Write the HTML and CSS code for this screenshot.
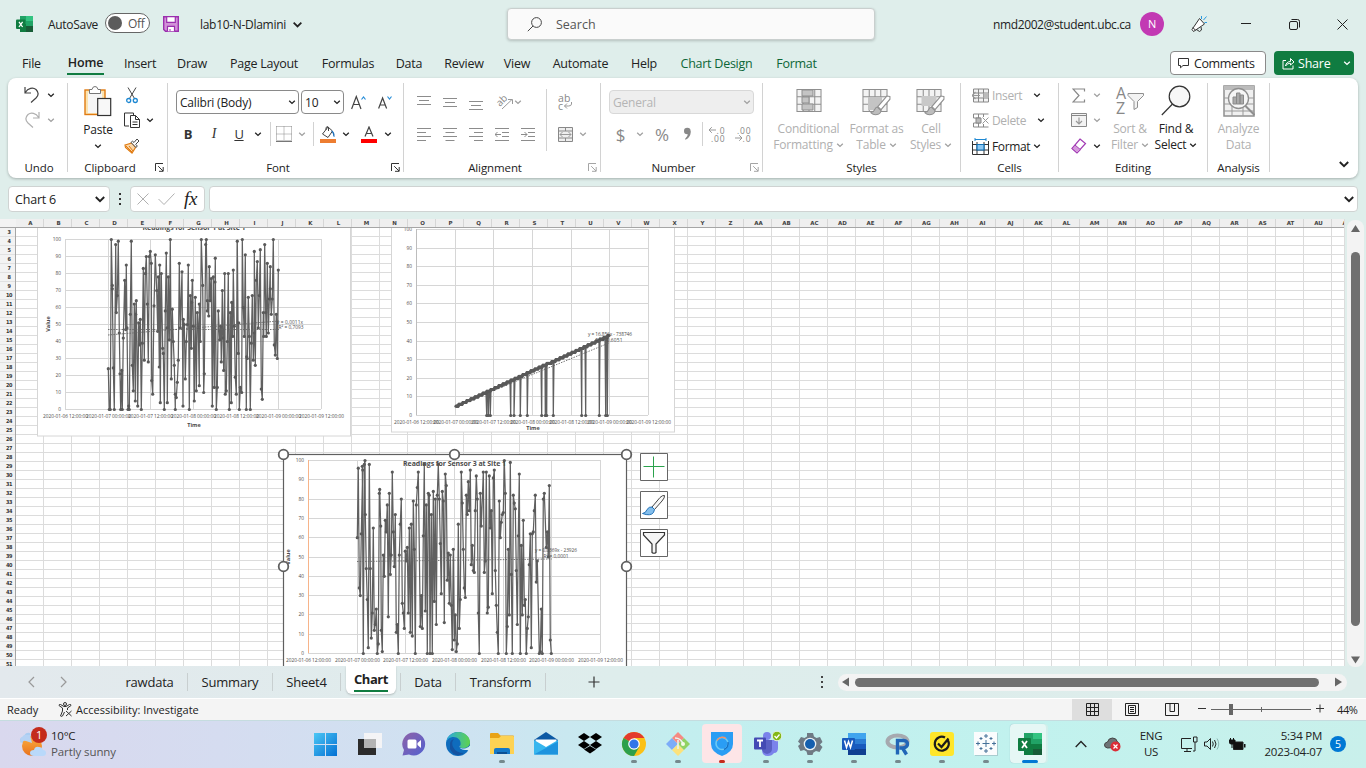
FILE: index.html
```html
<!DOCTYPE html>
<html lang="en">
<head>
<meta charset="utf-8">
<title>lab10-N-Dlamini - Excel</title>
<link rel="stylesheet" href="styles.css">
</head>
<body>
<svg class="defs" width="0" height="0">
  <symbol id="chev" viewBox="0 0 8 8"><path d="M1.2 2.7 4 5.4 6.8 2.7" fill="none" stroke="currentColor" stroke-width="1.3"/></symbol>
  <symbol id="launch" viewBox="0 0 9 9"><path d="M.5 8V.5H8M3.2 3.2l4.8 4.8M8.2 4v4.3H4" fill="none" stroke="currentColor"/></symbol>
  <symbol id="tbl" viewBox="0 0 24 22"><path d="M.5.5h23v21H.5z" fill="#f3f3f3" stroke="#8f8f8f"/><path d="M.5 7.5h23M.5 14.5h23M6.500 .5v21M17.500 .5v21M12 .5v21" stroke="#8f8f8f" fill="none"/></symbol>
  <symbol id="brush" viewBox="0 0 20 20"><path d="M19 1.500 16 1 7.500 11l3 3L19 4z" fill="#fff" stroke="#8f8f8f"/><path d="M7 11.500c-3 0-2 5-6 5.500 3 3 9 2 9.500-2z" fill="#bdbdbd" stroke="#8f8f8f"/></symbol>
</svg>

<header class="titlebar">
  <div class="c"><svg width="17" height="16" viewBox="0 0 17 16"><path d="M4 0h12a1 1 0 0 1 1 1v14a1 1 0 0 1-1 1H4z" fill="#21a366"/><path d="M4 8h6v8H4z" fill="#107c41"/><path d="M10 0h6q1 0 1 1v4h-7z" fill="#33c481"/><path d="M10 10h7v6h-7z" fill="#185c37"/><rect y="3.500" width="9.500" height="9.500" rx="1" fill="#107c41"/><path d="m3 5.800 3.600 5.200M6.600 5.800 3 11" stroke="#fff" stroke-width="1.300"/></svg></div>
  <span class="autosave">AutoSave</span>
  <div class="toggle"><i></i><span>Off</span></div>
  <div class="c"><svg width="16" height="16"><path d="M.7.7h14.600v14.600H2.500L.7 13.500z" fill="#d291d8" stroke="#9b2fae" stroke-width="1.400"/><path d="M3.700.7h8.600v5.600H3.700zM4.500 15.300v-5h7v5" fill="#fff" stroke="#9b2fae" stroke-width="1.200"/><path d="M7 13v2" stroke="#9b2fae"/></svg></div>
  <span class="docname">lab10-N-Dlamini</span>
  <div class="c"><svg width="11" height="11"><use href="#chev"/></svg></div>
  <div class="search"><svg width="16" height="16"><circle cx="9.500" cy="6.500" r="4.900" fill="none" stroke="#444"/><path d="M6 10 .8 15.200" stroke="#444"/></svg><span>Search</span></div>
  <span class="email">nmd2002@student.ubc.ca</span>
  <div class="c"><b class="avatar">N</b></div>
  <div class="c"><svg width="18" height="18" fill="none" stroke="#333"><path d="M9.500 3.500 2 14.500l1.500 2L14.500 9zM2.800 12.500l3 3" fill="#fff"/><path d="m6.500 14.500 3 2 2-1.500-.5-3"/><path d="M11.500 4V1M13.500 5l3-3.500M14.500 7.500H17" stroke="#2b9be0"/></svg></div>
  <div class="c"><svg width="10" height="10"><path d="M0 4.500h10" stroke="#222"/></svg></div>
  <div class="c"><svg width="11" height="11" fill="none" stroke="#222"><rect x=".5" y="2.500" width="8" height="8" rx="1.500"/><path d="M2.500 .5h6q2 0 2 2v6"/></svg></div>
  <div class="c"><svg width="11" height="11"><path d="m.5.5 10 10M10.500.5l-10 10" stroke="#222"/></svg></div>
</header>

<nav class="tabs">
  <span>File</span><span class="on">Home</span><span>Insert</span><span>Draw</span><span>Page Layout</span><span>Formulas</span><span>Data</span><span>Review</span><span>View</span><span>Automate</span><span>Help</span><span class="ctx">Chart Design</span><span class="ctx">Format</span>
  <div class="comments"><svg width="12" height="12"><path d="M.5 1.500h10v7H5l-2.500 2.300V8.500h-2z" fill="none" stroke="#333"/></svg>Comments</div>
  <div class="share"><svg width="13" height="13" fill="none" stroke="#fff"><path d="M4 3.500H1v8.500h10V8.500M3.500 9C4 6 6 4.500 8.500 4.500v-3L12 5 8.500 8V6.300C6.500 6.300 5 7 3.500 9z"/></svg><span>Share</span><svg width="8" height="8"><use href="#chev"/></svg></div>
</nav>

<section class="ribbon">
  <div class="group g-undo">
    <div class="tools three">
      <div class="row"><svg width="16" height="18" fill="none" stroke="#444" stroke-width="1.200"><path d="M1 1v6h6M1.300 6.500C4 2 9 1 12 3.500c3 3 2.500 6 0 8.500L7 16.500"/></svg><svg class="ch"><use href="#chev"/></svg></div>
      <div class="row dim"><svg width="16" height="18" fill="none" stroke="currentColor" stroke-width="1.200"><path d="M15 1v6H9M14.700 6.500C12 2 7 1 4 3.500c-3 3-2.500 6 0 8.500l5 4.500"/></svg><svg class="ch"><use href="#chev"/></svg></div>
    </div>
    <h4>Undo</h4>
  </div>

  <div class="group g-clip">
    <div class="split">
      <div class="big"><svg width="28" height="31"><rect x="1" y="4" width="20" height="24.500" fill="#fbe3b0" stroke="#e07b12" stroke-width="1.400"/><path d="M4 6.500h14V27H4z" fill="#f6f6f6"/><path d="M5.500 3.500H8q.5-3 3-3t3 3h2.500v4h-11z" fill="#fff" stroke="#777"/><rect x="13.700" y="12.500" width="13" height="17" fill="#f8f8f8" stroke="#333" stroke-width="1.200"/></svg><span>Paste</span><svg class="ch"><use href="#chev"/></svg></div>
      <div class="tools three">
        <div class="row"><svg width="12" height="17"><path d="M2 .5 8.500 11.500M10 .5 3.500 11.500" stroke="#444"/><circle cx="2.700" cy="13.500" r="2" fill="none" stroke="#1e88d2" stroke-width="1.300"/><circle cx="9.300" cy="13.500" r="2" fill="none" stroke="#1e88d2" stroke-width="1.300"/></svg></div>
        <div class="row"><svg width="17" height="17" fill="none" stroke="#333"><path d="M5 14H.5V1h9v2"/><path d="M6.500 3.500h5l4 4v8h-9zM11.500 3.500v4h4M8.500 10h5M8.500 12.500h5"/></svg><svg class="ch"><use href="#chev"/></svg></div>
        <div class="row"><svg width="16" height="16"><path d="m1 7 7-2 3.500 4.500L8 15 1.500 9.500z" fill="#fbd7a8" stroke="#e07b12" stroke-width="1.200"/><path d="m2 8 6 6M5 8l4 5" stroke="#e07b12"/><path d="m7 4.500 5 5 1.300-1.500-1.600-1.700L15 3 13 1l-3 3.500-1.500-1.300z" fill="#fff" stroke="#444"/></svg></div>
      </div>
    </div>
    <h4>Clipboard</h4><svg class="launch"><use href="#launch"/></svg>
  </div>

  <div class="group g-font">
    <div class="tools two">
      <div class="row r1">
        <div class="box"><span>Calibri (Body)</span><svg class="ch"><use href="#chev"/></svg></div>
        <div class="box"><span>10</span><svg class="ch"><use href="#chev"/></svg></div>
        <svg width="15" height="15" fill="none" stroke="#444" stroke-width="1.200"><path d="M.6 14 5.300 1.500 10 14M2.300 9.500h6"/><path d="m10.500 4.500 2-2.500 2 2.500" stroke="#2b8fd8"/></svg>
        <svg width="14" height="14" fill="none" stroke="#444" stroke-width="1.200"><path d="M.6 13.500 4.600 3l4 10.500M2 10h5"/><path d="m9.500 1.500 2 2.500 2-2.500" stroke="#2b8fd8"/></svg>
      </div>
      <div class="row r2">
        <b>B</b><i class="it">I</i><u>U</u><svg class="ch"><use href="#chev"/></svg><em class="bar"></em>
        <svg class="dim" width="16" height="16"><path d="M.5.500h15M.5 .5v14M15.500 .5v14M8 .5v14M.5 8h15" fill="none" stroke="#888" stroke-dasharray="1 1"/><path d="M0 15.300h16" stroke="#777" stroke-width="1.400"/></svg><svg class="ch dim"><use href="#chev"/></svg><em class="bar"></em>
        <svg width="16" height="17"><path d="m8 1-5.500 7L8 11.500 12.500 5zM6 4V1.500q2-2 2.500 0V5" fill="#fff" stroke="#444"/><path d="M11 4.500q4 .5 3.500 6.500-1.500 0-1.500-3z" fill="#1d6fb8"/><path d="M0 13h16v4H0z" fill="#ed7d31"/></svg><svg class="ch"><use href="#chev"/></svg>
        <svg width="16" height="17"><path d="m4 10.500 4-9.500 4 9.500M5.300 7.500h5.400" fill="none" stroke="#444" stroke-width="1.200"/><path d="M0 13h16v4H0z" fill="#f00"/></svg><svg class="ch"><use href="#chev"/></svg>
      </div>
    </div>
    <h4>Font</h4><svg class="launch"><use href="#launch"/></svg>
  </div>

  <div class="group g-align dim">
    <div class="split">
      <div class="tools two">
        <div class="row r1">
          <svg class="ln up"><path d="M0 3.500h14M2 7.500h10M0 11.500h14"/></svg>
          <svg class="ln"><path d="M0 3.500h14M2 7.500h10M0 11.500h14"/></svg>
          <svg class="ln dn"><path d="M0 3.500h14M2 7.500h10M0 11.500h14"/></svg>
          <svg class="orient" width="17" height="17"><text x="0" y="10" font-size="10" fill="#888" transform="rotate(-45 5 8)">ab</text><path d="m5 15 10-9.500M11 5.500h4.500V10" fill="none" stroke="#999"/></svg>
          <svg class="ch"><use href="#chev"/></svg>
        </div>
        <div class="row r2">
          <svg class="ln"><path d="M0 1.500h14M0 5.500h9M0 9.500h14M0 13.500h9"/></svg>
          <svg class="ln"><path d="M0 1.500h14M2.500 5.500h9M0 9.500h14M2.500 13.500h9"/></svg>
          <svg class="ln"><path d="M0 1.500h14M5 5.500h9M0 9.500h14M5 13.500h9"/></svg>
          <svg class="ln"><path d="M0 1.500h14M7 5.500h7M7 9.500h7M0 13.500h14M0 7.500h6M2.500 5 0 7.500 2.500 10"/></svg>
          <svg class="ln"><path d="M0 1.500h14M7 5.500h7M7 9.500h7M0 13.500h14M0 7.500h6M3.500 5 6 7.500 3.500 10"/></svg>
        </div>
      </div>
      <em class="bar tall"></em>
      <div class="tools two side">
        <div class="row"><svg width="15" height="17" fill="none"><text x="0" y="8" font-size="10.500" textLength="12.500" fill="#888">ab</text><text x="0" y="16" font-size="10.500" fill="#888">c</text><path d="M13.500 8v2q0 2-3 2H6.500M9 9.500 6.500 12 9 14.500" stroke="#999"/></svg></div>
        <div class="row"><svg width="15" height="15"><path d="M.5.5h14v14H.5zM.5 4h14M.5 11h14M7.500 .5V4M7.500 11v3.500" fill="#eee" stroke="#888"/><path d="M2 7.500h11M4.500 5 2 7.500 4.500 10M10.500 5 13 7.500 10.500 10" fill="none" stroke="#999"/></svg><svg class="ch"><use href="#chev"/></svg></div>
      </div>
    </div>
    <h4>Alignment</h4><svg class="launch"><use href="#launch"/></svg>
  </div>

  <div class="group g-num dim">
    <div class="tools two">
      <div class="row r1"><div class="box off"><span>General</span><svg class="ch"><use href="#chev"/></svg></div></div>
      <div class="row r2"><span class="sym">$</span><svg class="ch"><use href="#chev"/></svg><span class="sym">%</span><svg width="9" height="14"><circle cx="4.300" cy="4" r="3.300" fill="#888"/><path d="M7.600 4q.6 6-5 8.700l-.6-.8Q5 9.500 5 6z" fill="#888"/></svg><em class="bar"></em>
        <svg width="16" height="16"><path d="M0 4h7M2.800 1.200 0 4l2.800 2.800" fill="none" stroke="#999"/><text x="7.500" y="7.500" font-size="8.500" fill="#888" textLength="8">.0</text><text x="2" y="15.500" font-size="8.500" fill="#888" textLength="13.500">.00</text></svg>
        <svg width="16" height="16"><path d="M0 12h7M4.200 9.200 7 12l-2.800 2.800" fill="none" stroke="#999"/><text x="2" y="7.500" font-size="8.500" fill="#888" textLength="13.500">.00</text><text x="7.500" y="15.500" font-size="8.500" fill="#888" textLength="8">.0</text></svg>
      </div>
    </div>
    <h4>Number</h4><svg class="launch"><use href="#launch"/></svg>
  </div>

  <div class="group g-styles dim">
    <div class="bigs">
      <div class="big"><svg width="28" height="31"><use href="#tbl" x="0" y="4" width="28" height="23"/><path d="M7 5h11v6H7zM7 12h7v6H7zM7 19h11v6H7z" fill="#c4c4c4" stroke="#8f8f8f"/></svg><span>Conditional</span><span>Formatting <svg class="ch"><use href="#chev"/></svg></span></div>
      <div class="big"><svg width="32" height="31"><use href="#tbl" x="0" y="4" width="28" height="23"/><path d="M7 12h14v13H7z" fill="#c4c4c4"/><use href="#brush" x="8" y="10" width="23" height="21"/></svg><span>Format as</span><span>Table <svg class="ch"><use href="#chev"/></svg></span></div>
      <div class="big"><svg width="32" height="31"><use href="#tbl" x="0" y="4" width="28" height="23"/><path d="M6.500 11h15v10h-15z" fill="#c9c9c9"/><use href="#brush" x="8" y="10" width="23" height="21"/></svg><span>Cell</span><span>Styles <svg class="ch"><use href="#chev"/></svg></span></div>
    </div>
    <h4>Styles</h4>
  </div>

  <div class="group g-cells">
    <div class="tools three">
      <div class="row"><svg width="17" height="15"><path d="M1.500 1h15v13h-15zM1.500 5h15M1.500 10h15M6.500 1v13M11.500 1v13" fill="#f3f3f3" stroke="#888"/><path d="M11.500 5h5v5h-5z" fill="#bbb"/><path d="M0 7.500h8M3.500 4 0 7.500 3.500 11" fill="none" stroke="#999" stroke-width="1.200"/></svg><span class="dim">Insert</span><svg class="ch"><use href="#chev"/></svg></div>
      <div class="row wide"><svg width="17" height="15"><path d="M1.500 1h15M1.500 14h15M1.500 5h7M1.500 10h7M1.500 1v4M6.500 1v13M11.500 1v3M11.500 11v3M1.500 10v4" fill="none" stroke="#888"/><path d="M4 5h5v5H4z" fill="#bbb" stroke="#888"/><path d="m10.500 4.500 6 6M16.500 4.500l-6 6" stroke="#999"/></svg><span class="dim">Delete</span><svg class="ch"><use href="#chev"/></svg></div>
      <div class="row"><svg width="17" height="17"><path d="M.5 3v13.500h16V3M.5 6.500h16M.5 12h16M5 4v12.500M12 4v12.500" fill="none" stroke="#333"/><path d="M5 6.500h7v5.500H5z" fill="#8cc7f2" stroke="#1272b8" stroke-width="1.200"/><path d="M3 1.500h11M3 0v3M14 0v3" stroke="#1e88d2"/></svg><span>Format</span><svg class="ch"><use href="#chev"/></svg></div>
    </div>
    <h4>Cells</h4>
  </div>

  <div class="group g-edit">
    <div class="split">
      <div class="tools three">
        <div class="row dim"><svg width="14" height="15"><path d="M12.500 3.500V1H1l6 6.500L1 14h11.500v-2.500" fill="none" stroke="#888" stroke-width="1.200"/></svg><svg class="ch"><use href="#chev"/></svg></div>
        <div class="row dim"><svg width="16" height="14"><path d="M.5.5h15v13H.5zM.5 2.500h15" fill="#f3f3f3" stroke="#888"/><path d="M8 4.500v6.500M5 8l3 3 3-3" fill="none" stroke="#999" stroke-width="1.200"/></svg><svg class="ch"><use href="#chev"/></svg></div>
        <div class="row"><svg width="16" height="16"><path d="m9 1 5.500 4.500-8.500 9.500L1 10.500z" fill="#fff" stroke="#a23cb4" stroke-width="1.200"/><path d="m4 7 5.500 4.700L6 15 1 10.500z" fill="#d69add" stroke="#a23cb4"/></svg><svg class="ch"><use href="#chev"/></svg></div>
      </div>
      <div class="big dim"><svg class="sort" width="30" height="31"><text x="1" y="13.500" font-size="16" fill="#888">A</text><text x="1" y="29" font-size="16" fill="#888">Z</text><path d="M13 8.500h15.500v2l-6 6v6l-3.500 2v-8l-6-6z" fill="#f3f3f3" stroke="#8f8f8f"/></svg><span>Sort &amp;</span><span>Filter <svg class="ch"><use href="#chev"/></svg></span></div>
      <div class="big"><svg width="30" height="31"><circle cx="18.500" cy="11.500" r="10.300" fill="#f7f7f7" stroke="#333" stroke-width="1.200"/><path d="M11.500 19 .8 30" stroke="#333" stroke-width="1.200"/></svg><span>Find &amp;</span><span>Select <svg class="ch"><use href="#chev"/></svg></span></div>
    </div>
    <h4>Editing</h4>
  </div>

  <div class="group g-an">
    <div class="big dim"><svg width="32" height="32"><path d="M1 1h30v30H1z" fill="#f0f0f0" stroke="#8f8f8f" stroke-width="1.500"/><path d="M1 1h30v4H1z" fill="#bbb"/><path d="M1 13h30M1 19h30M1 26h30M9 20v11M20 20v11" stroke="#999"/><circle cx="15.500" cy="13.500" r="10" fill="#f6f6f6" stroke="#8f8f8f" stroke-width="1.300"/><path d="M10 12h3.500v7H10zM13.500 8H17v11h-3.500zM17 10h3.500v9H17z" fill="#aaa" stroke="#8a8a8a"/><path d="m22.500 21 9 9" stroke="#8f8f8f" stroke-width="2"/></svg><span>Analyze</span><span>Data</span></div>
    <h4>Analysis</h4>
  </div>
  <div class="collapse"><svg width="12" height="12"><use href="#chev"/></svg></div>
</section>

<section class="formula">
  <div class="namebox"><span>Chart 6</span><svg width="12" height="12"><use href="#chev"/></svg></div>
  <svg width="3" height="14"><path d="M0 2h2M0 7h2M0 12h2" stroke="#333" stroke-width="2"/></svg>
  <div class="fx"><svg width="12" height="12"><path d="m.5.5 11 11M11.500.5l-11 11" stroke="#b0b0b0"/></svg><svg width="17" height="12"><path d="m.5 6 5.500 5.500L16.500.5" fill="none" stroke="#b0b0b0"/></svg><i>fx</i></div>
  <div class="input"><svg width="12" height="12"><use href="#chev"/></svg></div>
</section>

<main class="workbook">
  <div class="sheet">
    <div class="corner"></div>
    <div class="cols" id="cols"></div>
    <div class="rows" id="rows"></div>
    <div class="cells" id="cells">
      <svg class="chart one" id="c1" viewBox="37 228 315 209"></svg>
      <svg class="chart two" id="c2" viewBox="391 228 285 206"></svg>
      <svg class="chart three" id="c3" viewBox="276 448 358 218"></svg>
      <div class="chartbtns">
        <svg width="28" height="28"><path d="M.5.500h27v27H.5z" fill="#fff" stroke="#666"/><path d="M13.500 3.500v21M3.500 13.500h21" stroke="#2ba24c"/></svg>
        <svg width="28" height="28"><path d="M.5.500h27v27H.5z" fill="#fff" stroke="#666"/><path d="M24.500 4.500q-2-.5-4.500 2l-8 9.500 2.500 2.500L22 10q3-3.500 2.500-5.500z" fill="#f8f8f8" stroke="#444"/><path d="M12 16q-3-.5-5 2.500-1 3.500-4.500 4 8 3 11-1l1-3z" fill="#83beec" stroke="#2272b8"/></svg>
        <svg width="28" height="28"><path d="M.5.500h27v27H.5z" fill="#fff" stroke="#666"/><path d="M3.500 3.500h21V6l-8.500 9v8.500q-2 1.500-4 0V15L3.500 6z" fill="#f5f5f5" stroke="#333" stroke-width="1.200"/></svg>
      </div>
    </div>
  </div>
  <div class="vscroll"><svg width="9" height="8"><path d="M4.500 0 9 7H0z" fill="#666"/></svg><i></i><svg width="9" height="8"><path d="M4.500 7.500 9 .5H0z" fill="#666"/></svg></div>
</main>

<section class="sheettabs">
  <div class="c grey"><svg width="7" height="12"><path d="M6 1 1 6l5 5" fill="none" stroke="#999" stroke-width="1.200"/></svg></div>
  <div class="c grey"><svg width="7" height="12"><path d="m1 1 5 5-5 5" fill="none" stroke="#999" stroke-width="1.200"/></svg></div>
  <span>rawdata</span><span>Summary</span><span>Sheet4</span><span class="on"><b>Chart</b></span><span class="af">Data</span><span>Transform</span>
  <div class="c"><svg width="12" height="12"><path d="M6 .5v11M.5 6h11" stroke="#333" stroke-width="1.200"/></svg></div>
  <div class="c"><svg width="3" height="14"><path d="M0 2h2M0 7h2M0 12h2" stroke="#444" stroke-width="2"/></svg></div>
  <div class="hscroll"><svg width="8" height="10"><path d="M0 5l7-4.500v9z" fill="#666"/></svg><i></i><svg width="8" height="10"><path d="M8 5 1 .5v9z" fill="#666"/></svg></div>
</section>

<footer class="status">
  <span class="ready">Ready</span>
  <svg width="14" height="15" fill="none" stroke="#333"><circle cx="7" cy="2" r="1.500"/><path d="M1 3.500q0-1.500 1.500-1L6 4.500h2l3.500-2Q13 2 13 3.500L9.500 6v2M4.500 6 1 3.500M4.500 6v3l-2 5q1.500 1 2 0l2-4M8 9l5.500 5M13.500 9 8 14"/></svg>
  <span class="acc">Accessibility: Investigate</span>
  <div class="view on"><svg width="13" height="13"><path d="M.5.500h12v12H.5zM.5 4.500h12M.5 8.500h12M4.500 .5v12M8.500 .5v12" fill="none" stroke="#222"/></svg></div>
  <div class="view"><svg width="14" height="13"><path d="M.5.500h13v12H.5zM3.500 2.500h7v8h-7zM5 4.500h4M5 6.500h4M5 8.500h4" fill="none" stroke="#222"/></svg></div>
  <div class="view"><svg width="14" height="13"><path d="M.5.500h13v12H.5zM5 .5v8h4.500V.5" fill="none" stroke="#222"/></svg></div>
  <svg width="126" height="13"><path d="M0 5.500h8M118 5.500h8M122 1.500v8" stroke="#333"/><path d="M13 6.500h100M63.500 4v5" stroke="#666"/><path d="M31 1h4v11h-4z" fill="#666"/></svg>
  <span class="pct">44%</span>
</footer>

<footer class="taskbar">
  <div class="weather">
    <svg width="27" height="27"><defs><linearGradient id="w" x2="0" y2="1"><stop stop-color="#fbb040"/><stop offset="1" stop-color="#e8711c"/></linearGradient></defs><path d="M4 12q-4 0-4-3t4-3q1-5 6-4l3 10z" fill="#a9cdf2"/><circle cx="12" cy="15" r="10" fill="url(#w)"/><path d="M0 12q2-3 6-2l6 2-2-8H4L1 7z" fill="#b5d2f4"/><path d="M14 25q-4 0-4-3t4-3q1-4 5-3 3 0 4 3 3 0 3 3t-3 3z" fill="#b9d9fa"/></svg>
    <em>1</em>
    <p><b>10°C</b><span>Partly sunny</span></p>
  </div>
  <div class="apps">
    <div><svg viewBox="0 0 24 24"><defs><linearGradient id="win" x2="1" y2="1"><stop stop-color="#4cc7f5"/><stop offset="1" stop-color="#0370d3"/></linearGradient></defs><path d="M0 1h11v11H0zM12 1h11v11H12zM0 13h11v11H0zM12 13h11v11H12z" fill="url(#win)"/></svg></div>
    <div><svg viewBox="0 0 24 24"><path d="M0 7h18v16H0z" fill="#2c2c2c"/><path d="M6 1h18v15H6z" fill="#f4f4f6"/><path d="M6 7h12v9H6z" fill="#b4b4b4"/></svg></div>
    <div><svg viewBox="0 0 24 24"><defs><linearGradient id="cht" x2="1" y2="1"><stop stop-color="#8e62a8"/><stop offset="1" stop-color="#5361d0"/></linearGradient></defs><path d="M12 .5a11.500 11.500 0 1 1-5 22L.5 23.500 2 18A11.500 11.500 0 0 1 12 .5z" fill="url(#cht)"/><rect x="5.500" y="7.500" width="9" height="9" rx="1.500" fill="#fff"/><path d="m15.500 11 3.500-3v8l-3.500-3z" fill="#fff"/></svg></div>
    <div><svg viewBox="0 0 24 24"><defs><linearGradient id="ed" x2="1"><stop stop-color="#2aa8e4"/><stop offset="1" stop-color="#5ed34c"/></linearGradient></defs><circle cx="12" cy="12" r="12" fill="#0f6cbd"/><path d="M0 11C1 4 6 0 12 0c7 0 12 5 12 10 0 4-3 6-7 6-3 0-4-1-2.500-3 1-5-3-8-7-8C4 5 1 7 0 11z" fill="url(#ed)"/><path d="M4 12q0-4 4-5-3 3-1 8 3 6 11 6-9 6-14-4z" fill="#1553a0"/><path d="M14 13.500c-1.500 2 1 3.500 4.500 3 2-.3 4-1.200 5-2.500l2 0-1.500 5-3-1c-5 0-8-1-7-4.500z" fill="#cfe9f2"/></svg></div>
    <div class="run"><svg viewBox="0 0 24 24"><path d="M0 2q0-1 1-1h7l2.500 2.500H23q1 0 1 1V22H0z" fill="#e8a317"/><path d="M0 6h9l2-2h12q1 0 1 1v17H0z" fill="#fdd253"/><path d="M4 22v-4q0-2 2-2h12q2 0 2 2v4z" fill="#1478c8"/><path d="M7 20h10v2H7z" fill="#0b4f94"/></svg></div>
    <div><svg viewBox="0 0 24 24"><path d="M12 0 24 8v4H0V8z" fill="#0c59a4"/><path d="M1.500 7.500h21V16h-21z" fill="#fff"/><path d="M0 8v14.500h24V8L12 15z" fill="#36b6ee"/><path d="m0 22.500 24-13v13z" fill="#1d93de"/></svg></div>
    <div><svg viewBox="0 0 24 24"><path d="m6 1 6 4-6 4-6-4zM18 1l6 4-6 4-6-4zM6 9l6 4-6 4-6-4zM18 9l6 4-6 4-6-4zM12 14l6 3.500-6 4-6-4z" fill="#000"/></svg></div>
    <div class="run"><svg viewBox="0 0 24 24"><circle cx="12" cy="12" r="12" fill="#fbc116"/><path d="M12 12 1.600 6A12 12 0 0 1 22.400 6H12z" fill="#e33b2e"/><path d="M1.600 6A12 12 0 0 0 12 24l5.200-9L12 12z" fill="#2da04c"/><circle cx="12" cy="12" r="5.800" fill="#fff"/><circle cx="12" cy="12" r="4.600" fill="#2f76e8"/></svg></div>
    <div class="run"><svg viewBox="0 0 24 24"><path d="m0 12 6-6 6 6-6 6z" fill="#7cacf8"/><path d="m6 6 6-6 6 6-6 6z" fill="#f58a83"/><path d="m6 18 6-6 6 6-6 6z" fill="#fbe27c"/><path d="m12 12 6-6 6 6-6 6z" fill="#90d264"/><path d="M9 6q6 0 8 6M12 8v9" fill="none" stroke="#e8f5f3" stroke-width="1.500"/><circle cx="17" cy="12" r="2" fill="#f4fbe9"/></svg></div>
    <div class="hot"><svg viewBox="0 0 24 24"><path d="M1 0h22v12q0 8-11 12Q1 20 1 12z" fill="#2a9df4"/><circle cx="12" cy="11.500" r="6" fill="none" stroke="#6cc9f5" stroke-width="1.600"/><path d="M7 8.500a6 6 0 0 1 9-2" fill="none" stroke="#f0926a" stroke-width="1.500"/><path d="M18 10q1 5-4 7.500" fill="none" stroke="#1670c5" stroke-width="1.500"/></svg></div>
    <div class="run"><svg viewBox="0 0 24 24"><circle cx="13" cy="4" r="4" fill="#7b83eb"/><path d="M8 8h16v8q0 5-4 5-2 3-6 3-6 0-6-6z" fill="#7b83eb"/><path d="M8 8h10v9q0 4-5 5-5-1-5-5z" fill="#5a60c4"/><rect y="5.500" width="12" height="12" rx="1" fill="#444ab4"/><path d="M3 8.500h6M6 8.500V15" stroke="#fff" stroke-width="1.800"/><circle cx="23" cy="4" r="4.800" fill="#84b816" stroke="#e4f3e9"/><path d="m20.500 4 2 2 3-3.500" fill="none" stroke="#fff" stroke-width="1.300"/></svg></div>
    <div class="run"><svg viewBox="0 0 24 24"><path d="M9 1h6l1 3.500 2.500 1.500 3.500-1 2.500 5-2.500 2.500 2.500 2.500-3 5-3.500-1-2.500 1.500L14.500 23h-5l-1-3.500L6 18l-3.500 1-2.500-5 2.300-2L0 9.500 3 5l3.500 1L9 4.500z" fill="#6f7a84"/><circle cx="12" cy="12" r="6.300" fill="#e9f1f5"/><circle cx="12" cy="12" r="5" fill="#155fae"/></svg></div>
    <div class="run"><svg viewBox="0 0 24 24"><path d="M6 1h18v6H6z" fill="#41a5ee"/><path d="M6 7h18v5H6z" fill="#2b7cd3"/><path d="M6 12h18v5H6z" fill="#185abd"/><path d="M6 17h18v6H6z" fill="#103f91"/><rect y="6" width="13" height="12" rx="1" fill="#185abd"/><path d="m2.500 8.500 2 7 2-6 2 6 2-7" fill="none" stroke="#fff" stroke-width="1.500"/></svg></div>
    <div class="run"><svg viewBox="0 0 24 24"><ellipse cx="11.500" cy="9.500" rx="10" ry="6" fill="none" stroke="#a6a9af" stroke-width="4"/><path d="M11.500 22.500V8.500h6q4 .5 4 3.500t-4 4h-4M16.500 16l4 6.500" fill="none" stroke="#2166b7" stroke-width="3.400"/></svg></div>
    <div class="run"><svg viewBox="0 0 24 24"><rect width="24" height="24" rx="3" fill="#ffe62a"/><path d="M18 8.500A7 7 0 1 1 15 5.500M8 11.500l3.500 3.500 7-8.500" fill="none" stroke="#1b1b1b" stroke-width="2.200"/></svg></div>
    <div class="run"><svg viewBox="0 0 24 24"><path d="M1 1h23v23H1z" fill="#a9cdd0"/><path d="M0 0h23v23H0z" fill="#fafcfd"/><path d="M12 8v7M8.500 11.500h7M12 2v4M10 4h4M12 17v4M10 19h4M2 11.500h4M4 9.500v4M18 11.500h4M20 9.500v4M7 5v3M5.500 6.500h3M17 5v3M15.500 6.500h3M7 15v3M5.500 16.500h3M17 15v3M15.500 16.500h3" stroke="#447198" stroke-width="1"/></svg></div>
    <div class="act"><svg viewBox="0 0 24 24"><path d="M6 1h18v22H6z" fill="#21a366"/><path d="M15 1h9v6h-9z" fill="#33c481"/><path d="M6 12h9v11H6z" fill="#107c41"/><path d="M15 12h9v11h-9z" fill="#185c37"/><path d="M15 12h9v5h-9z" fill="#107c41"/><rect y="6" width="13" height="13" rx="1" fill="#107c41"/><path d="m4 9 5 7M9 9l-5 7" stroke="#fff" stroke-width="1.800"/></svg></div>
  </div>
  <div class="tray">
    <div class="c"><svg width="12" height="8"><path d="M.7 7 6 1.500 11.300 7" fill="none" stroke="#222" stroke-width="1.300"/></svg></div>
    <div class="c"><svg width="18" height="15"><path d="M3.500 11q-3-.5-3-3t3-3q1-4 5-4 4 0 5 4 3 1 2 5z" fill="#6d7376" stroke="#444"/><circle cx="11.500" cy="9.500" r="5" fill="#dc2c36"/><path d="m9.500 7.500 4 4M13.500 7.500l-4 4" stroke="#fff" stroke-width="1.200"/></svg></div>
    <div class="lang"><span>ENG</span><span>US</span></div>
    <div class="c"><svg width="17" height="17" fill="none" stroke="#222"><path d="M10 2.500H.5v10h10.500M3 15.500h7M6 12.500v3M12.500 1h3.500v5h-3.500zM14 6v9h-2"/></svg></div>
    <div class="c"><svg width="17" height="14" fill="none" stroke="#222"><path d="M.5 5v4h2.500l3.500 3.500v-11L3 5zM8.500 4.500q1.500 2.500 0 5M10.500 3q3 4 0 8"/><path d="M13 1.500q3.500 5.500 0 11" stroke="#8cb5b2"/></svg></div>
    <div class="c"><svg width="17" height="13"><path d="M4.500 4h9.500v7.500H4.500z" fill="#111" stroke="#222"/><path d="M15 6h1.500v3.500H15z" fill="#111"/><path d="M1.500 0v2.500M4.500 0v2.500M0 2h6v2.500L4.500 6h-3L0 4.500zM3 5v5" fill="#111" stroke="#111"/></svg></div>
    <div class="clock"><span>5:34 PM</span><span>2023-04-07</span></div>
    <b class="note">5</b>
  </div>
</footer>
<script src="script.js"></script>
</body>
</html>
```

FILE: styles.css
```css
* { box-sizing: border-box; }
body { margin: 0; width: 1366px; height: 768px; overflow: hidden; background: #dfeeeb; color: #222; font: 12px "Open Sans", "Noto Sans", sans-serif; letter-spacing: -.25px; }
svg { display: block; flex: none; }
svg text { font-family: "Open Sans", "Noto Sans", sans-serif; letter-spacing: 0; }
.defs { position: absolute; }
span { white-space: nowrap; }
.c { display: flex; align-items: center; justify-content: center; }
.ch { width: 8px; height: 8px; color: #222; }
.dim .ch, .ch.dim { color: #a0a0a0; }
.dim { color: #b0b0b0; }

/* title bar */
.titlebar { height: 48px; display: grid; align-items: center; grid-template-columns: 48px 57px 45px 42px 96px 18px 201px 368px 118px 138px 42px 52px 42px 54px 43px; }
.titlebar .docname { padding-left: 8px; letter-spacing: -.3px; }
.titlebar .search { grid-column: 8; }
.titlebar .email { grid-column: 10; letter-spacing: -.38px; }
.autosave { letter-spacing: -.3px; }
.toggle { height: 20px; margin-top: -2px; border: 1px solid #666; border-radius: 10px; background: #fff; display: flex; align-items: center; gap: 6px; padding-left: 2px; color: #555; }
.toggle i { width: 14px; height: 14px; border-radius: 50%; background: #5c5c5c; }
.search { height: 32px; width: 368px; background: #fafafa; border: 1px solid #c9cfce; border-radius: 4px; box-shadow: 0 1px 3px #0003; display: flex; align-items: center; gap: 13px; padding-left: 19px; color: #555; font-size: 12.500px; letter-spacing: 0; }
.avatar { width: 24px; height: 24px; border-radius: 50%; background: #c239b3; color: #fff; font-weight: 400; font-size: 11px; line-height: 24px; text-align: center; }

/* ribbon tabs */
.tabs { height: 30px; padding-left: 8px; display: grid; align-items: center; grid-template-columns: 47px 61px 48px 56px 88px 80px 42px 68px 38px 89px 38px 107px 53px 443px 8px 80px; font-size: 12.500px; }
.tabs > span { text-align: center; }
.tabs .on { justify-self: center; font-weight: 600; width: 37px; line-height: 22px; height: 23px; letter-spacing: -.2px; border-bottom: 2px solid #107c41; }
.tabs .ctx { color: #0d6637; }
.comments { justify-self: end; width: 96px; height: 24px; background: #fff; border: 1px solid #8a8a8a; border-radius: 4px; display: flex; align-items: center; gap: 4px; padding-left: 7px; letter-spacing: -.4px; }
.share { grid-column: 16; height: 24px; border-radius: 4px; background: #107c41; color: #fff; display: flex; align-items: center; padding-left: 8px; gap: 3px; letter-spacing: -.2px; }
.share svg:last-child { margin-left: 9px; }

/* ribbon */
.ribbon { width: 1350px; height: 100px; margin-left: 8px; padding-top: 5px; background: #fff; border-radius: 8px; box-shadow: 0 1px 3px #0004; display: flex; }
.group { position: relative; height: 89px; border-right: 1px solid #d2d2d2; }
.group h4 { margin: 0; height: 18px; line-height: 18px; text-align: center; font-size: 11.500px; font-weight: 400; color: #222; letter-spacing: -.1px; }
.launch { position: absolute; right: 3px; bottom: 0; width: 9px; height: 9px; color: #333; }
.dim .launch { color: #a5a5a5; }
.three { height: 76px; }
.three .row { height: 26px; display: grid; align-items: center; }
.three .row:first-child { height: 24px; }
.three .row, .two .row { justify-items: center; }
.two { height: 76px; padding-top: 3px; }
.two .row { height: 32px; display: grid; align-items: center; }
.split { display: flex; height: 76px; }
.big { display: flex; flex-direction: column; align-items: center; height: 76px; padding-top: 2px; }
.big > span { line-height: 16px; display: flex; align-items: center; gap: 3px; letter-spacing: -.2px; }
.big > svg:first-child { margin-bottom: 5px; }
.bar { width: 1px; height: 24px; background: #d2d2d2; }

.g-undo { width: 60px; }
.g-undo .row { grid-template-columns: 48px 5px; justify-content: start; }
.g-undo .ch { margin-left: -16px; }
.g-undo h4 { padding-left: 3px; }

.g-clip { width: 100px; }
.g-clip .big { width: 44px; margin-left: 8px; padding-top: 3px; }
.g-clip .big .ch { margin-top: 4px; }
.g-clip .tools { margin-left: 1px; }
.g-clip .tools .row { grid-template-columns: 22px 14px; }
.g-clip h4 { width: 84px; }

.g-font { width: 236px; }
.g-font .r1 { grid-template-columns: 123px 43px 24px 26px; column-gap: 2px; padding-left: 8px; }
.g-font .r2 { grid-template-columns: 24px 28px 22px 16px 8px 20px 16px 7px 22px 14px 32px 6px; padding-left: 8px; }
.box { width: 100%; height: 24px; border: 1px solid #8a8a8a; border-radius: 4px; display: flex; align-items: center; justify-content: space-between; padding: 0 2px 0 3px; color: #222; letter-spacing: -.2px; }
.box.off { background: #eee; border-color: #d8d8d8; color: #b5b5b5; }
.g-font b, .g-font .it, .g-font u { font-size: 13px; color: #333; }
.g-font .it { font-family: "Liberation Serif", serif; font-size: 14px; }
.g-font h4 { width: 220px; }

.g-align { width: 197px; }
.g-align .split > .two:first-child { width: 142px; }
.g-align .r1 { grid-template-columns: 26px 26px 26px 36px 0; padding-left: 7px; }
.g-align .r1 .ch { margin-left: -14px; }
.g-align .orient { margin-left: -4px; }
.g-align .r2 { grid-template-columns: repeat(5, 26px); padding-left: 7px; }
.orient { overflow: visible; }
.ln { width: 14px; height: 15px; fill: none; stroke: #8c8c8c; }
.ln.up { margin-top: -4px; }
.ln.dn { margin-top: 6px; }
.bar.tall { height: 62px; margin-top: 6px; }
.g-align .side .row { grid-template-columns: 36px 0; }
.g-align h4 { width: 182px; }

.g-num { width: 162px; }
.g-num .r1 { padding: 0 8px; }
.g-num .r2 { grid-template-columns: 23px 16px 28px 23px 7px 22px 30px; padding-left: 8px; justify-content: start; }
.g-num svg { overflow: visible; }
.sym { font-size: 17px; color: #888; }
.g-num h4 { width: 145px; }

.g-styles { width: 198px; }
.bigs { display: grid; grid-template-columns: 79px 57px 52px; padding-left: 6px; }
.g-styles .big svg:first-child { margin-left: 0; }

.g-cells { width: 98px; }
.g-cells .row { grid-template-columns: 20px 41px 12px; padding-left: 11px; justify-items: start; justify-content: start; }
.g-cells .row.wide { grid-template-columns: 20px 45px 12px; }
.g-cells .row span { letter-spacing: -.35px; }

.g-edit { width: 149px; }
.g-edit .tools { width: 51px; }
.g-edit .tools .row { grid-template-columns: 30px 6px; padding-left: 5px; }
.g-edit .big { width: 46px; }
.g-edit .split > .big:nth-child(2) { margin-left: -3px; }
.g-edit .sort { overflow: visible; }

.g-an { width: 62px; }
.g-an .big > svg:first-child { margin-bottom: 4px; }
.collapse { flex: 1; display: flex; justify-content: flex-end; align-items: flex-end; padding: 0 8px 8px 0; }

/* formula bar */
.formula { height: 41px; padding: 1px 8px 0; display: flex; align-items: center; }
.formula > div { height: 26px; background: #fff; border: 1px solid #cfd3d2; border-radius: 4px; display: flex; align-items: center; }
.namebox { width: 102px; justify-content: space-between; padding: 0 3px 0 6px; margin-right: 9px; }
.formula .namebox { padding: 0 3px 0 6px; }
.namebox span { font-size: 12.500px; letter-spacing: -.2px; }
.fx { width: 75px; margin-left: 8px; padding-left: 6px; gap: 9px; }
.fx i { font: italic 19px "Liberation Serif", serif; color: #222; }
.input { flex: 1; margin-left: 4px; justify-content: flex-end; padding-right: 2px; }

/* sheet */
.workbook { height: 447px; display: flex; }
.sheet { width: 1345px; height: 447px; display: grid; grid-template: 9px 438px / 16px 1329px; overflow: hidden; background: #fff; border-right: 1px solid #ddd; }
.corner { background: #f3f3f3; border-bottom: 1px solid #a6a6a6; }
.cols { display: flex; overflow: hidden; background: #efefef; border-bottom: 1px solid #a6a6a6; }
.cols span { flex: none; width: 28px; height: 8px; font: bold 5.500px/8px "DejaVu Sans", sans-serif; letter-spacing: 0; text-align: center; padding-left: 2px; border-right: 1px solid #d6d6d6; color: #444; }
.rows { overflow: hidden; background: #f3f3f3; border-right: 1px solid #a6a6a6; }
.rows span { display: block; height: 9px; font: bold 5.500px/9px "DejaVu Sans Condensed", "DejaVu Sans", sans-serif; letter-spacing: -.5px; text-align: center; padding-left: 3px; border-bottom: 1px solid #e1e1e1; color: #333; }
.cells { position: relative; overflow: hidden; background: repeating-linear-gradient(90deg, transparent 0 27px, #dcdcdc 27px 28px), repeating-linear-gradient(#fff 0 8px, #dcdcdc 8px 9px); }
.chart { position: absolute; }
.chart.one { left: 21px; top: 0; width: 315px; height: 209px; }
.chart.two { left: 375px; top: 0; width: 285px; height: 206px; padding: 0; }
.chart.three { left: 260px; top: 220px; width: 358px; height: 218px; }
.chartbtns { position: absolute; left: 624px; top: 225px; display: flex; flex-direction: column; gap: 10px; }
.chart text { font-family: "Open Sans", sans-serif; fill: #4c4c4c; }
.vscroll { width: 17px; margin: 1px 0 0 2px; height: 447px; background: #f3f3f3; border-radius: 8px; display: flex; flex-direction: column; align-items: center; padding-top: 5px; }
.vscroll i { width: 9px; height: 374px; margin: 19px 0 30px; border-radius: 5px; background: #707070; }

/* sheet tabs */
.sheettabs { height: 32px; display: grid; grid-template-columns: 47px 33px 108px 85px 69px 4px 50px 4px 56px 90px 94px 362px 509px; grid-template-columns: 47px 33px 108px 85px 73px 50px 60px 90px 95px 362px 509px; background: linear-gradient(90deg, #e3e9ed, #deedec 45%, #ddedeb); font-size: 13px; letter-spacing: -.2px; align-items: center; }
.sheettabs .c:first-child { padding-left: 16px; }
.sheettabs > span { height: 18px; line-height: 18px; text-align: center; border-right: 1px solid #c8cfd0; }
.sheettabs > span:nth-child(3) { padding-left: 32px; }
.sheettabs > span:nth-child(5) { margin-right: 5px; }
.sheettabs .on { align-self: start; width: 50px; height: 28px; background: #fff; border: 0; border-radius: 0 0 6px 6px; box-shadow: 0 1px 2px #0003; line-height: 24px; font-weight: 600; padding-top: 1px; }
.sheettabs .on b { display: inline-block; font-weight: 700; letter-spacing: -.4px; line-height: 22px; height: 24px; border-bottom: 2px solid #107c41; }
.sheettabs .af { margin-left: 4px; border-left: 1px solid #c8cfd0; }
.sheettabs .c:nth-child(10) { justify-content: flex-end; padding-right: 179px; }
.hscroll { height: 17px; width: 509px; margin-left: -165px; border-radius: 9px; background: #f3f3f3; display: flex; align-items: center; padding-left: 4px; gap: 5px; }
.hscroll i { width: 464px; height: 9px; border-radius: 5px; background: #707070; }
.hscroll svg:last-child { margin-left: 10px; }

/* status */
.status { height: 22px; background: #f4f4f4; border-top: 1px solid #fff; display: flex; align-items: center; font-size: 11px; letter-spacing: 0; }
.ready { width: 50px; padding-left: 7px; }
.status > svg:nth-child(2) { margin-left: 8px; }
.acc { width: 996px; margin-left: 4px; }
.view { width: 40px; height: 21px; display: flex; align-items: center; justify-content: center; }
.view.on { background: #dedede; }
.status > svg:nth-last-child(2) { margin-left: 6px; }
.pct { margin-left: 13px; letter-spacing: -.4px; }

/* taskbar */
.taskbar { height: 48px; padding-bottom: 1px; display: grid; grid-template-columns: 304px 747px 315px; background: linear-gradient(90deg, #d9d8ee, #d5dcf0 16%, #cfe2f1 33%, #c3eeef 50%, #c1f2ee 75%, #c9f0eb); border-top: 1px solid #c5dcdf; }
.weather { position: relative; display: flex; align-items: center; padding-left: 20px; gap: 4px; }
.weather em { position: absolute; left: 31px; top: 6px; width: 16px; height: 16px; border-radius: 50%; background: #c42b1c; color: #fff; font: 11px/16px "Open Sans", sans-serif; text-align: center; }
.weather p { margin: 0; }
.weather b, .weather span { display: block; font-weight: 400; line-height: 16px; font-size: 11.500px; }
.weather span { color: #555; letter-spacing: -.1px; }
.apps { display: grid; grid-template-columns: repeat(17, 44px); }
.apps div { position: relative; display: flex; justify-content: center; align-items: center; }
.apps svg { width: 24px; height: 24px; overflow: visible; }
.run::after, .hot::after, .act::after { content: ""; position: absolute; bottom: 4px; left: 19px; width: 6px; height: 3px; border-radius: 2px; background: #75898d; }
.hot::before, .act::before { content: ""; position: absolute; left: 2px; top: 3px; width: 40px; height: 39px; border-radius: 4px; background: #fde5e7; }
.act::before { background: #e6f7f5; box-shadow: 2px 0 0 #d2efeb, 0 0 1px #8ab; width: 36px; }
.hot svg, .act svg { position: relative; }
.hot::after { background: #c42b1c; }
.act::after { left: 14px; width: 16px; background: #0078d4; }
.tray { display: grid; grid-template-columns: 46px 18px 58px 18px 28px 22px 74px 23px; align-items: center; padding-left: 7px; font-size: 11.500px; }
.tray .c { min-width: 0; }
.lang span, .clock span { display: block; line-height: 16px; }
.lang { text-align: center; }
.clock { display: flex; flex-direction: column; align-items: flex-end; }
.note { width: 16px; height: 16px; border-radius: 50%; background: #0078d4; color: #fff; font: 10.500px/16px "Open Sans", sans-serif; text-align: center; margin-left: 8px; }
```

FILE: script.js
```js
const colBox = document.getElementById("cols");
for (let i = 0; i < 48; i++) {
  const s = document.createElement("span");
  s.textContent = i < 26 ? String.fromCharCode(65 + i) : "A" + String.fromCharCode(39 + i);
  colBox.append(s);
}
const rowBox = document.getElementById("rows");
for (let r = 3; r <= 51; r++) {
  const s = document.createElement("span");
  s.textContent = r;
  rowBox.append(s);
}

const s1 = "325,24 328,0 331,0 334,100 337,73 337,71 340,24.5 343,0 347,97 349,57 352,67 355,99 358,45 360,21 362,0 365,23 367,0 370,42 374,76 377,47 379,85 381,48 384,0 386,2 388,0 391,56 394,99 397,26 400,11 403,62 406,5 407,56 409,64 413,2 416,51 419,38 421,53 424,0 427,39 430,83 433,29 436,80 439,90 442,62 445,28 448,90 451,93 454,86 455,17 458,9 462,61 466,91 470,70 473,46 475,78 478,25 479,85 481,4 484,80 488,36 490,33 493,0 496,58 499,92 501,48 502,4 505,78 508,41 511,100 514,18 517,59 520,40 523,26 526,0 526,9 529,7 532,16 535,29 538,86 541,48 546,81 549,2 550,53 553,50 556,18 559,40 562,50 565,85 568,0 571,67 574,36 575,63 577,76 580,49 583,5 586,66 589,11 592,57 595,48 598,14 598,62 601,40 604,100 608,73 611,10 613,21 617,97 619,100 622,58 622,64 626,55 628,84 631,64 634,77 637,2 640,78 643,13 645,75 646,89 649,0 652,13 655,58 659,41 662,49 664,28 667,70 669,42 671,23 674,80 676,9 679,11 682,40 685,80 688,0 691,57 694,4 695,63 698,43 700,82 703,49 706,19 709,9 712,99 715,33 716,51 718,0 721,13 725,10 727,100 730,60 733,43 736,91 739,0 740,31 742,30 745,66 748,43 751,0 754,39 757,67 760,29 763,45 763,93 766,26 769,76 772,87 775,48 778,67 781,94 784,12 787,6 790,57 791,43 794,97 797,57 799,43 802,86 805,45 808,65 811,84 811,71 814,56 817,65 820,100 823,38 826,32 829,56 832,30 835,82";
const s3 = "262,60 265,96 268,34 271,30 274,62 278,95 277,97 280,0 283,98 285,100 286,72 289,44 292,28 295,3 298,98 301,44 304,8 307,21 310,65 313,12 316,15 319,23 322,0 325,5 328,83 329,85 332,66 334,12 337,1 340,51 343,40 346,69 349,63 352,77 355,19 358,83 361,41 364,51 367,94 370,63 373,45 376,72 379,11 382,15 385,0 388,51 391,67 394,80 397,26 400,21 403,13 406,53 409,48 412,55 415,21 418,65 421,11 424,67 427,9 430,79 433,54 436,0 439,77 442,86 445,94 451,14 454,30 457,13 460,61 463,98 466,22 469,77 472,0 475,83 478,82 480,0 484,72 487,0 490,84 493,27 496,80 499,15 502,82 505,98 508,80 511,57 514,31 517,84 520,79 523,16 526,93 529,87 532,38 535,52 538,26 541,51 544,25 547,2 550,54 553,7 556,20 559,1 562,5 565,67 568,13 571,28 574,94 577,78 580,54 583,34 586,29 589,82 592,72 595,89 598,74 601,95 604,46 607,56 610,43 613,42 616,74 619,92 622,80 625,21 628,0 631,83 634,66 640,94 643,42 646,48 649,94 652,21 655,24 658,92 661,65 664,74 667,31 670,91 673,95 676,43 679,25 682,11 685,0 688,79 691,60 694,68 697,72 700,73 703,100 706,83 709,0 712,14 715,54 718,20 721,99 724,41 727,0 730,82 733,78 736,75 739,43 742,15 745,61 748,93 751,0 754,56 757,20 760,69 763,25 766,28 769,0 772,13 775,19 778,46 781,62 784,3 787,62 790,63 793,74 796,82 799,37 802,48 808,0 811,1 814,23 817,0 820,80 823,83 829,55 832,63 835,50 838,87 841,7 844,0";
const parse = (str, off) => str.split(" ").map(p => { const [x, v] = p.split(",").map(Number); return [off + x / 3, v]; });

// sensor 2 climbs in steps and drops out to zero now and then
const drops = [320, 325, 331, 392, 402, 421, 442, 485, 496, 500, 520, 605, 617, 658, 677, 682];
const s2 = [];
for (let x = 228; x <= 689; x += 3) {
  s2.push([380 + x / 3, Math.round(5 + (x - 228) / 461 * 38)]);
  const d = drops.find(q => q >= x && q < x + 3);
  if (d) s2.push([380 + d / 3, 0]);
}

const days = ["06 12", "07 00", "07 12", "08 00", "08 12", "09 00", "09 12"].map(d => "2020-01-" + d + ":00:00");
function txt(x, y, str, size, extra) {
  return `<text x="${x}" y="${y}" font-size="${size}" text-anchor="middle" ${extra || ""}>${str}</text>`;
}
function plot(x0, x1, y0, y1, data, axis) {
  let g = "";
  for (let i = 0; i <= 10; i++) {
    const y = Math.round(y0 + (y1 - y0) * i / 10) + .5;
    g += `<path d="M${x0} ${y}H${x1}" stroke="#d6d6d6"/>` + `<text x="${x0 - 4}" y="${y + 1.7}" font-size="4.800" text-anchor="end">${i * 10}</text>`;
  }
  for (let i = 0; i <= 6; i++) {
    const x = Math.round(x0 + (x1 - x0) * i / 6) + .5;
    g += `<path d="M${x} ${y0}V${y1}" stroke="${i ? "#d6d6d6" : axis}"/>`;
    g += txt(x, y0 + 8.500, days[i], 4.800, 'textLength="45"');
  }
  const Y = v => +(y0 + .5 + (y1 - y0) * v / 100).toFixed(1);
  g += `<path d="M${data.map(([x, v]) => x.toFixed(1) + " " + Y(v)).join("L")}" fill="none" stroke="#606060" stroke-width="1.250" stroke-linejoin="round"/>`;
  g += data.map(([x, v]) => `<circle cx="${x.toFixed(1)}" cy="${Y(v)}" r="1.600" fill="#595959"/>`).join("");
  return g;
}
const dash = 'fill="none" stroke="#666" stroke-width=".9" stroke-dasharray="1.500 1.200"';

document.getElementById("c1").innerHTML =
  '<rect x="37.500" y="220" width="313" height="216" fill="#fff" stroke="#d6d6d6"/>' +
  plot(65, 321, 409, 239, parse(s1, 0), "#d6d6d6") +
  `<path d="M108 329.500H279M108 335 279 321" ${dash}/>` +
  txt(194, 230, "Readings for Sensor 1 at Site 1", 7, 'font-weight="700" textLength="103"') +
  txt(194, 427, "Time", 5.500, 'font-weight="700"') +
  txt(50, 324, "Value", 5.500, 'font-weight="700" transform="rotate(-90 50 324)"') +
  txt(290, 323.500, "y = 0,0011x", 4.800, 'textLength="26"') + txt(291, 329, "R² = 0,7093", 4.800, 'textLength="25"');

document.getElementById("c2").innerHTML =
  '<rect x="391.500" y="220" width="283" height="212" fill="#fff" stroke="#d6d6d6"/>' +
  plot(416, 648, 415, 229, s2, "#bdbdbd") +
  `<path d="M456 405.500 480 396 609 343" ${dash}/>` +
  `<path d="M${s2.filter(p => p[1]).map(([x, v]) => x + " " + (415.500 - v * 1.86)).join("L")}" fill="none" stroke="#595959" stroke-width="3"/>` +
  txt(533, 430, "Time", 5.500, 'font-weight="700"') +
  txt(610, 336, "y = 16,856x - 738746", 4.800, 'textLength="44"') + txt(609, 342, "R² = 0,6051", 4.800, 'textLength="27"');

let h = "";
[[283.500, 454.500], [454.500, 454.500], [626.500, 454.500], [283.500, 566.500], [626.500, 566.500]].forEach(([x, y]) => {
  h += `<circle cx="${x}" cy="${y}" r="4.800" fill="#fff" stroke="#5f5f5f" stroke-width="1.800"/>`;
});
document.getElementById("c3").innerHTML =
  '<rect x="283.500" y="454.500" width="343" height="240" fill="#fff" stroke="#5f5f5f" stroke-width="1.200"/>' +
  plot(308, 600, 653, 460, parse(s3, 270), "#f7b48a") +
  `<path d="M357 561.500 552 559" ${dash}/>` +
  txt(454.500, 466, "Readings for Sensor 3 at Site 1", 7, 'font-weight="700" textLength="103"') +
  txt(290, 557, "Value", 5.500, 'font-weight="700" transform="rotate(-90 290 557)"') +
  txt(556, 552, "y = 0,0369x - 23926", 4.800, 'textLength="42"') + txt(556, 558, "R² = 0,0001", 4.800, 'textLength="25"') + h;
```
